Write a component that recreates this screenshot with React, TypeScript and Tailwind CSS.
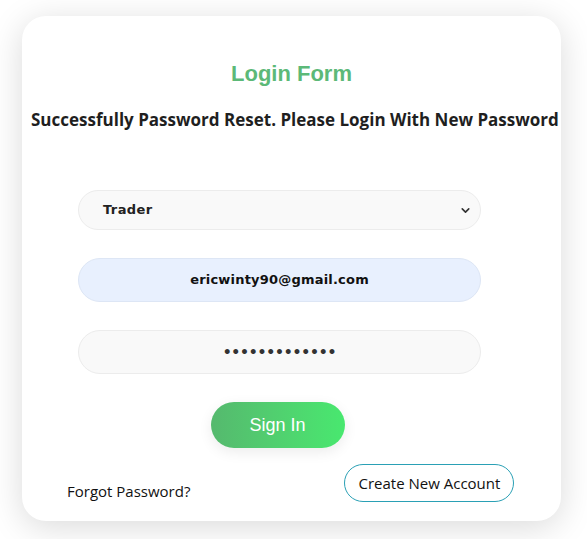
import { ChevronDown } from "lucide-react";

const App = () => {
  return (
    <div className="min-h-[539px] w-[587px] bg-white pt-[16px] pl-[22px]">
      <div className="w-[539px] h-[505px] rounded-[24px] bg-white shadow-[0_6px_34px_rgba(0,0,0,0.15)]">
        <h1 className="pt-[45px] text-center font-['Liberation_Sans',sans-serif] text-[22px] leading-[26px] font-bold text-[#5cb978]">
          Login Form
        </h1>
        <p className="mt-[21px] ml-[9px] whitespace-nowrap font-['Open_Sans',sans-serif] text-[17px] leading-[24px] font-bold text-[#1f1f1f]">
          Successfully Password Reset. Please Login With New Password
        </p>

        <form className="ml-[56px] mt-[58px] w-[403px] font-['DejaVu_Sans',sans-serif]">
          <div className="relative h-[40px] rounded-full border border-[#ececec] bg-[#f9f9f9]">
            <span className="absolute left-[24px] top-[10px] text-[13px] leading-[18px] font-bold tracking-[0.4px] text-[#222]">
              Trader
            </span>
            <ChevronDown className="absolute right-[8px] top-[13px] h-[13px] w-[13px] text-[#333]" strokeWidth={3} />
          </div>
          <div className="mt-[28px] flex h-[44px] items-center justify-center rounded-full border border-[#dde6f5] bg-[#e8f0fe] text-[13px] font-bold tracking-[0.2px] text-[#111]">
            ericwinty90@gmail.com
          </div>
          <div className="mt-[28px] flex h-[44px] items-center justify-center rounded-full border border-[#ececec] bg-[#f9f9f9] text-[14px] font-bold tracking-[-0.2px] text-[#333]">
            •••••••••••••
          </div>
          <div className="mt-[28px] flex justify-center">
            <button
              type="button"
              className="ml-[-4px] h-[46px] w-[134px] rounded-full bg-gradient-to-r from-[#55b96e] to-[#48e86f] font-['Liberation_Sans',sans-serif] text-[18px] text-white shadow-[0_4px_14px_rgba(0,0,0,0.08)]"
            >
              Sign In
            </button>
          </div>
        </form>

        <div className="mt-[16px] flex items-start font-['Open_Sans',sans-serif] text-[15px] text-[#111]">
          <span className="ml-[45px] mt-[17px] leading-[20px]">Forgot Password?</span>
          <button
            type="button"
            className="ml-[154px] h-[38px] w-[170px] rounded-full border border-[#2aa0b5] bg-white leading-[20px] text-[#111]"
          >
            Create New Account
          </button>
        </div>
      </div>
    </div>
  );
};

export default App;
